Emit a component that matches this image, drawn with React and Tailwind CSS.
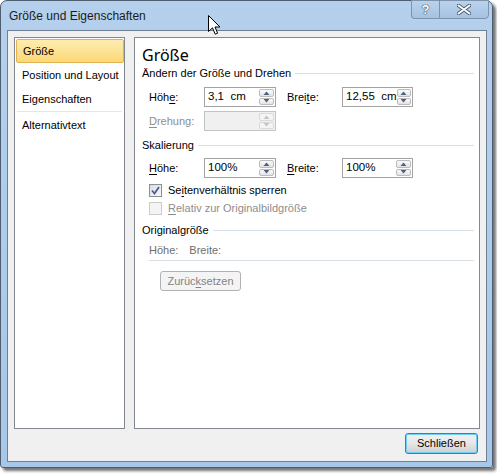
const font = "font-['Liberation_Sans',_'Noto_Sans',_sans-serif]";

const menu = [
  { id: "size", label: "Größe", active: true },
  { id: "pos", label: "Position und Layout" },
  { id: "props", label: "Eigenschaften" },
];

function Spinner({ disabled }) {
  const arrow = disabled ? "#c0c6cf" : "#4c6185";
  return (
    <div className="flex flex-col w-[15px] h-full gap-px">
      {[0, 1].map((i) => (
        <div
          key={i}
          className={
            "flex-1 flex items-center justify-center rounded-[2px] border " +
            (disabled
              ? "border-[#dadada] bg-[#f4f4f4]"
              : "border-[#bcbcbc] bg-gradient-to-b from-[#fbfbfb] to-[#e3e3e3]")
          }
        >
          <svg width="7" height="4" viewBox="0 0 7 4">
            {i === 0 ? (
              <path d="M0.5 4 L3.5 0.5 L6.5 4 Z" fill={arrow} />
            ) : (
              <path d="M0.5 0 L3.5 3.5 L6.5 0 Z" fill={arrow} />
            )}
          </svg>
        </div>
      ))}
    </div>
  );
}

function SpinInput({ value, width = "w-[72px]", disabled }) {
  return (
    <div
      className={
        "flex items-stretch h-[20px] border p-px " +
        width +
        (disabled ? " border-[#c4c4c4] bg-[#f0f0f0]" : " border-[#a3a3a3] bg-white")
      }
    >
      <div className="flex-1 flex items-center pl-[2px] text-[11.5px] text-black whitespace-pre">
        {value}
      </div>
      <Spinner disabled={disabled} />
    </div>
  );
}

function Key({ children }) {
  return <span className="underline underline-offset-[2px]">{children}</span>;
}

function SectionHeader({ children, className = "" }) {
  return (
    <div className={"flex items-center h-[16px] pl-[7px] gap-[4px] " + className}>
      <span className="text-[11px] text-black leading-none whitespace-nowrap">{children}</span>
      <div className="flex-1 h-px bg-[#d5dfe5]" />
    </div>
  );
}

function Checkbox({ checked, disabled, children, className = "" }) {
  return (
    <div className={"flex items-center h-[16px] pl-[14px] " + className}>
      <div
        className={
          "w-[13px] h-[13px] border flex items-center justify-center " +
          (disabled
            ? "border-[#cccccc] bg-[#f4f4f4]"
            : "border-[#8e8f8f] bg-gradient-to-br from-[#dcdcdc] to-[#f8f8f8]")
        }
      >
        {checked && (
          <svg width="9" height="9" viewBox="0 0 9 9">
            <path d="M1 4.5 L3.5 7.5 L8 1" fill="none" stroke="#4a5f97" strokeWidth="1.8" />
          </svg>
        )}
      </div>
      <span
        className={
          "ml-[6px] text-[11px] leading-none " + (disabled ? "text-[#8d8d8d]" : "text-black")
        }
      >
        {children}
      </span>
    </div>
  );
}

function Cursor() {
  return (
    <svg className="absolute left-[208px] top-[15px]" width="13" height="21" viewBox="0 0 13 21">
      <path
        d="M0.5 0.5 L0.5 16.5 L4.5 12.8 L7.2 19.2 L9.6 18.2 L7 12 L12 12 Z"
        fill="white"
        stroke="black"
        strokeWidth="1"
        strokeLinejoin="round"
      />
    </svg>
  );
}

function CaptionButtons() {
  return (
    <div className="flex h-[19px] mr-[3px] -mt-px">
      <div className="w-[28px] h-full flex items-center justify-center border border-[#7d93ad] border-r-0 rounded-bl-[4px] bg-gradient-to-b from-[#bad3ec] to-[#a4c2e2]">
        <span
          className="text-[13px] font-bold text-white leading-none"
          style={{ textShadow: "0 0 1px #3b4a5c, 0 0 1px #3b4a5c, 0 0 1px #3b4a5c" }}
        >
          ?
        </span>
      </div>
      <div className="w-[50px] h-full flex items-center justify-center border border-[#7d93ad] rounded-br-[4px] bg-gradient-to-b from-[#bad3ec] to-[#a4c2e2]">
        <svg width="14" height="11" viewBox="0 0 14 11">
          <path
            d="M1.5 1.5 L12.5 9.5 M12.5 1.5 L1.5 9.5"
            stroke="#45556a"
            strokeWidth="3.6"
            strokeLinecap="round"
          />
          <path
            d="M1.5 1.5 L12.5 9.5 M12.5 1.5 L1.5 9.5"
            stroke="white"
            strokeWidth="2"
            strokeLinecap="round"
          />
        </svg>
      </div>
    </div>
  );
}

export default function App() {
  return (
    <div className={"relative w-[497px] h-[474px] bg-white " + font}>
      <div className="flex flex-col w-[493px] h-[468px] rounded-t-[7px] rounded-b-[3px] border border-[#4f5d70] bg-gradient-to-b from-[#b5d0ec] to-[#a7c7e9] shadow-[3px_3px_3px_rgba(0,0,0,0.55)] pb-[5px] pl-[6px] pr-[5px]">
        {/* TITLE BAR */}
        <div className="flex justify-between h-[29px] -mr-[5px] -ml-[6px]">
          <div className="pl-[8px] pt-[7px] text-[12px] text-[#1b1b1b] leading-[16px]">
            Größe und Eigenschaften
          </div>
          <CaptionButtons />
        </div>

        {/* CLIENT AREA */}
        <div className="flex-1 flex flex-col border border-[#6f8095] bg-[#f0f0f0] p-[6px]">
          <div className="flex gap-[9px] h-[392px]">
            {/* LEFT MENU */}
            <div className="w-[111px] h-full border border-[#828790] bg-white pt-px">
              {menu.map((item) =>
                item.active ? (
                  <div
                    key={item.id}
                    className="h-[24px] ml-[1px] flex items-center pl-[6px] border border-[#e0b253] rounded-[2px] bg-gradient-to-b from-[#fdecb2] to-[#fbd873] text-[11px] text-black"
                  >
                    {item.label}
                  </div>
                ) : (
                  <div key={item.id} className="h-[24px] flex items-center pl-[7px] text-[11px] text-black whitespace-nowrap">
                    {item.label}
                  </div>
                )
              )}
              <div className="h-px mx-[2px] bg-[#e6e6e6]" />
              <div className="h-[26px] flex items-center pl-[7px] text-[11px] text-black">
                Alternativtext
              </div>
            </div>

            {/* RIGHT CONTENT */}
            <div className="flex-1 h-full border border-[#828790] bg-white flex flex-col pr-[5px]">
              <div className="mt-[7px] h-[20px] pl-[7px] text-[16px] leading-[20px] text-black font-['Noto_Sans',_sans-serif]">
                Größe
              </div>
              <SectionHeader>Ändern der Größe und Drehen</SectionHeader>

              <div className="mt-[6px] flex items-center pl-[14px] text-[11px] text-black">
                <span className="w-[55px]">
                  Höh<Key>e</Key>:
                </span>
                <SpinInput value="3,1  cm" />
                <span className="w-[55px] ml-[11px]">
                  Brei<Key>t</Key>e:
                </span>
                <SpinInput value="12,55  cm" width="w-[71px]" />
              </div>

              <div className="mt-[4px] flex items-center pl-[14px] text-[11px] text-[#8d8d8d]">
                <span className="w-[55px]">
                  <Key>D</Key>rehung:
                </span>
                <SpinInput value="" disabled />
              </div>

              <SectionHeader className="mt-[6px]">Skalierung</SectionHeader>

              <div className="mt-[5px] flex items-center pl-[14px] text-[11px] text-black">
                <span className="w-[55px]">
                  <Key>H</Key>öhe:
                </span>
                <SpinInput value="100%" />
                <span className="w-[55px] ml-[11px]">
                  <Key>B</Key>reite:
                </span>
                <SpinInput value="100%" width="w-[71px]" />
              </div>

              <Checkbox checked className="mt-[4px]">
                Se<Key>i</Key>tenverhältnis sperren
              </Checkbox>
              <Checkbox disabled className="mt-[2px]">
                <Key>R</Key>elativ zur Originalbildgröße
              </Checkbox>

              <SectionHeader className="mt-[6px]">Originalgröße</SectionHeader>

              <div className="mt-[4px] h-[16px] flex items-center pl-[14px] text-[11px] text-[#6d6d6d] gap-[11px]">
                <span>Höhe:</span>
                <span>Breite:</span>
              </div>
              <div className="mt-[2px] ml-[14px] h-px bg-[#d5dfe5]" />

              <div className="mt-[10px] ml-[25px] w-[81px] h-[20px] flex items-center justify-center border border-[#adb2b5] rounded-[3px] bg-[#f4f4f4] text-[11px] text-[#838383]">
                Zurüc<Key>k</Key>setzen
              </div>
            </div>
          </div>

          {/* FOOTER */}
          <div className="flex justify-end mt-[4px] mr-[2px]">
            <div className="w-[73px] h-[21px] flex items-center justify-center rounded-[3px] border border-[#3c7fb1] shadow-[inset_0_0_0_1px_#6fd0f7] bg-gradient-to-b from-[#f2f2f2] via-[#e6e6e6] to-[#cfcfcf] text-[11px] text-black">
              Schließen
            </div>
          </div>
        </div>
      </div>
      <Cursor />
    </div>
  );
}
